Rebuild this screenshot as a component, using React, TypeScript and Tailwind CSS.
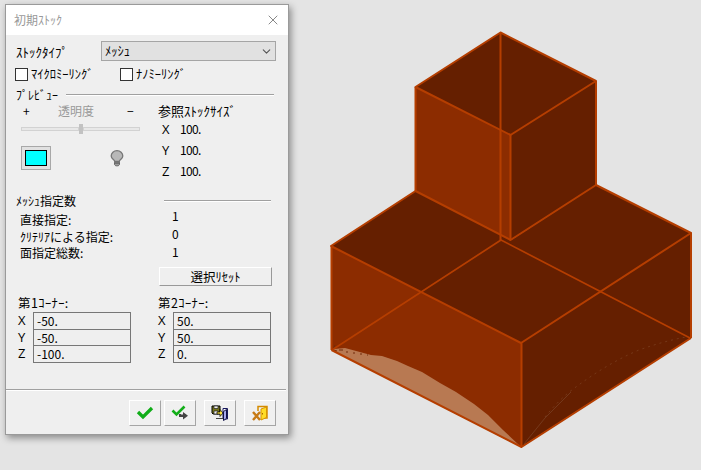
import React from "react";
import { X, ChevronDown } from "lucide-react";

function CheckItem({ label }: { label: string }) {
  return (
    <label className="flex items-center gap-[3px]">
      <span className="size-[13px] border border-[#333] bg-white" />
      <span className="whitespace-nowrap text-[12.5px]">{label}</span>
    </label>
  );
}

function Rule() {
  return <span className="h-[2px] flex-1 border-t border-[#a0a0a0] bg-white" />;
}

function Corner({ title, values }: { title: string; values: string[] }) {
  return (
    <div className="w-[113px]">
      <div className="h-[17px] text-[12.5px] leading-[16px] tracking-[0.4px]">{title}</div>
      <div className="flex">
        <div className="flex w-[15px] flex-col font-['Open_Sans','Noto_Sans_CJK_JP',sans-serif]">
          {["X", "Y", "Z"].map((axis) => (
            <span key={axis} className="h-[16.5px] text-[13px] leading-[17px]">{axis}</span>
          ))}
        </div>
        <div className="flex h-[51px] w-[98px] flex-col divide-y divide-[#777] border border-[#777]">
          {values.map((value, i) => (
            <span key={i} className="flex-1 pl-[3px] leading-[15px]">{value}</span>
          ))}
        </div>
      </div>
    </div>
  );
}

function ToolButton({ children }: { children: React.ReactNode }) {
  return (
    <button className="flex h-[26px] w-[32px] items-center justify-center border border-t-white border-l-white border-r-[#a5a5a5] border-b-[#a5a5a5] bg-[#f0f0f0]">
      {children}
    </button>
  );
}

function Bulb() {
  return (
    <svg width="14" height="17" viewBox="0 0 14 17">
      <path d="M4.700 11.500C4.700 9.800 1.200 9 1.200 6a5.800 5.300 0 0 1 11.600 0c0 3-3.500 3.800-3.500 5.500Z" fill="#b8b8b8" stroke="#777" strokeWidth="1.300" />
      <path d="M4.500 12.300h5v2.200l-1.200 1.300H5.700l-1.200-1.300Z" fill="#aaa" stroke="#666" />
      <path d="M4.500 13.700h5" stroke="#666" />
    </svg>
  );
}

function Dialog() {
  return (
    <section className="flex h-[431px] w-[284px] flex-none flex-col border border-[#9a9a9a] bg-[#efefef] shadow-[2px_3px_7px_rgba(0,0,0,0.4)]">
      <header className="flex h-[30px] items-center justify-between bg-white pr-[7px] pl-[8px] text-[#999]">
        <span>初期ｽﾄｯｸ</span>
        <X size={16} strokeWidth={1.5} className="text-[#888]" />
      </header>

      <div className="mt-[6px] flex h-[20px] items-center pl-[10px]">
        <span className="w-[85px] text-[13px]">ｽﾄｯｸﾀｲﾌﾟ</span>
        <div className="flex h-[20px] w-[175px] items-center justify-between border border-[#a5a5a5] bg-[#e1e1e1] pr-[2px] pl-[3px]">
          <span className="text-[12.5px]">ﾒｯｼｭ</span>
          <ChevronDown size={13} strokeWidth={2} className="text-[#555]" />
        </div>
      </div>

      <div className="mt-[7px] flex h-[13px] pl-[9px]">
        <div className="w-[105px]"><CheckItem label="ﾏｲｸﾛﾐｰﾘﾝｸﾞ" /></div>
        <CheckItem label="ﾅﾉﾐｰﾘﾝｸﾞ" />
      </div>

      <div className="mt-[5px] flex h-[18px] items-center pr-[14px] pl-[10px]">
        <span className="w-[50px]">ﾌﾟﾚﾋﾞｭｰ</span>
        <Rule />
      </div>

      <div className="flex h-[88px]">
        <div className="w-[151px] pl-[15px]">
          <div className="flex h-[14px] items-center text-[#999]">
            <span className="w-[37px] pl-[2px] text-black">+</span>
            <span className="w-[69px]">透明度</span>
            <span className="text-black">−</span>
          </div>
          <div className="mt-[6px] flex h-[10px] w-[119px] items-center">
            <span className="h-[4px] w-[58px] border border-[#d2d2d2] bg-[#e8e8e8]" />
            <span className="h-[10px] w-[4px] bg-[#c2c2c2]" />
            <span className="h-[4px] flex-1 border border-[#d2d2d2] bg-[#e8e8e8]" />
          </div>
          <div className="mt-[12px] flex items-center">
            <div className="flex h-[24px] w-[30px] items-center justify-center border border-[#a8a8a8] bg-[#e1e1e1]">
              <span className="h-[16px] w-[22px] border border-black bg-[#00ffff]" />
            </div>
            <span className="ml-[59px]"><Bulb /></span>
          </div>
        </div>
        <div className="pl-[1px]">
          <div className="h-[14px] text-[13px] leading-[14px]">参照ｽﾄｯｸｻｲｽﾞ</div>
          {["X", "Y", "Z"].map((axis) => (
            <div key={axis} className="flex h-[21px] items-center pl-[4px]">
              <span className="w-[18px] pt-px font-['Open_Sans',sans-serif] text-[13px]">{axis}</span>
              <span className="tracking-[-0.7px]">100.</span>
            </div>
          ))}
        </div>
      </div>

      <div className="flex h-[18px] items-center pr-[17px] pl-[10px]">
        <span className="w-[148px]">ﾒｯｼｭ指定数</span>
        <Rule />
      </div>

      <div className="flex h-[57px] pl-[14px]">
        <div className="w-[152px] pt-[2px]">
          {["直接指定:", "ｸﾘﾃﾘｱによる指定:", "面指定総数:"].map((label) => (
            <div key={label} className="h-[16.5px] leading-[16px]">{label}</div>
          ))}
        </div>
        <div className="-mt-[3px]">
          {["1", "0", "1"].map((value, i) => (
            <div key={i} className="h-[18px] leading-[18px]">{value}</div>
          ))}
        </div>
      </div>

      <button className="ml-[153px] h-[19px] w-[113px] border border-t-white border-l-white border-r-[#999] border-b-[#999] text-[12.5px] leading-[16px]">
        選択ﾘｾｯﾄ
      </button>

      <div className="mt-[9px] flex h-[68px] gap-[27px] pl-[12px]">
        <Corner title="第1ｺｰﾅｰ:" values={["-50.", "-50.", "-100."]} />
        <Corner title="第2ｺｰﾅｰ:" values={["50.", "50.", "0."]} />
      </div>

      <div className="mt-[26px] mr-[2px] h-[2px] border-t border-[#a0a0a0] bg-white" />

      <footer className="mt-[9px] flex pl-[123px]">
        <ToolButton>
          <svg width="18" height="14" viewBox="0 0 18 14"><path d="m2 6 5 5 9-9" fill="none" stroke="#10ad18" strokeWidth="3.300" /></svg>
        </ToolButton>
        <div className="w-[3px]" />
        <ToolButton>
          <svg width="18" height="16" viewBox="0 0 18 16">
            <path d="m1.500 5.500 4 4 8-8" fill="none" stroke="#13ae1a" strokeWidth="2.600" />
            <path d="M8 9v3h4v2.500l5-3.800-5-3.700v2.500h-2V9Z" fill="#444" />
          </svg>
        </ToolButton>
        <div className="w-[8px]" />
        <ToolButton>
          <svg width="18" height="16" viewBox="0 0 18 16">
            <path d="M1 1h8v8H2L1 8Z" fill="#77751c" stroke="#000" />
            <path d="M3 1h4v2.500H3ZM3 6h4v3H3Z" fill="#eee" stroke="#222" strokeWidth=".7" />
            <path d="M6 7h3V4.500L12 8l-3 3.500V9H6Z" fill="#ffe640" stroke="#000" strokeWidth=".7" />
            <path d="M12 3.500h4.500V14H12Z" fill="#fff" stroke="#17175c" />
            <path d="m12.500 6.500 3-2v9l-3 2Z" fill="#a7a9ec" stroke="#111144" />
            <path d="M5 13.500h7" stroke="#444" />
          </svg>
        </ToolButton>
        <div className="w-[8px]" />
        <ToolButton>
          <svg width="18" height="16" viewBox="0 0 18 16">
            <path d="M7 6V1.500h9V13h-3" fill="none" stroke="#d48a00" strokeWidth="1.500" />
            <path d="m10 4 5.500-2v10.500L10 15Z" fill="#ffdc27" stroke="#d79300" />
            <path d="m2 7 7 8M9 7l-7 8" stroke="#c77b16" strokeWidth="2.400" />
            <path d="M11.500 8v1.500" stroke="#a66400" />
          </svg>
        </ToolButton>
      </footer>
    </section>
  );
}

function StockModel() {
  return (
    <svg className="block" width="412" height="470" viewBox="289 0 412 470">
      <path d="M415.500 191 331 246v104l190 97 170-109V233l-95-48-85 55Z" fill="#651f00" />
      <path d="m500.500 32.500-85 54.500V191l95 49 85.500-55V81Z" fill="#651f00" />
      <path d="m415.500 87 95 48v105l-95-49ZM331.500 246 521.500 343v104l-190-97Z" fill="#8c2c00" />
      <path d="M334 349 345 348 371 355 382 356 397 361 408 366 422 372 440 383 456 392 474 404 488 415 503 430 520 446 334 351Z" fill="#b87952" />
      <path d="m335 345-2 5 4 1m2-1h4m3 2h2m5 1h2m5 1h2m5 1h1" fill="none" stroke="#702b0b" strokeWidth="1" />
      <path d="M545 417c7-9 15-17 23-24 22-17 45-32 71-43 17-6 31-10 47-13" fill="none" stroke="#865033" strokeWidth=".5" strokeDasharray="2 4" />
      <path d="m524 444 21-26 26-26" fill="none" stroke="#855238" strokeWidth=".5" />
      <g fill="none" stroke="#b53e00" strokeWidth="2" strokeLinejoin="round">
        <path d="m500.500 32.500-85 54.500 95 48 85.500-54Z" />
        <path d="M415.500 87v104M596 81v104M510.500 135v105M500.500 33v207" />
        <path d="m331 246 84.500-55 95 49 85.500-55 95 48-170 110ZM331.500 246v104M521.500 343v104M691 233v105" />
        <path d="m332 350 169-110 189 98" strokeWidth="1.700" />
        <path d="m331.500 350 190 97L691 338" />
      </g>
    </svg>
  );
}

export default function App() {
  return (
    <main className="flex h-[470px] w-[701px] overflow-hidden bg-[#e4e4e4] pt-[4px] pl-[5px] font-['Noto_Sans_CJK_JP',sans-serif] text-[12px] leading-none text-black">
      <Dialog />
      <div className="-mt-[4px]"><StockModel /></div>
    </main>
  );
}
